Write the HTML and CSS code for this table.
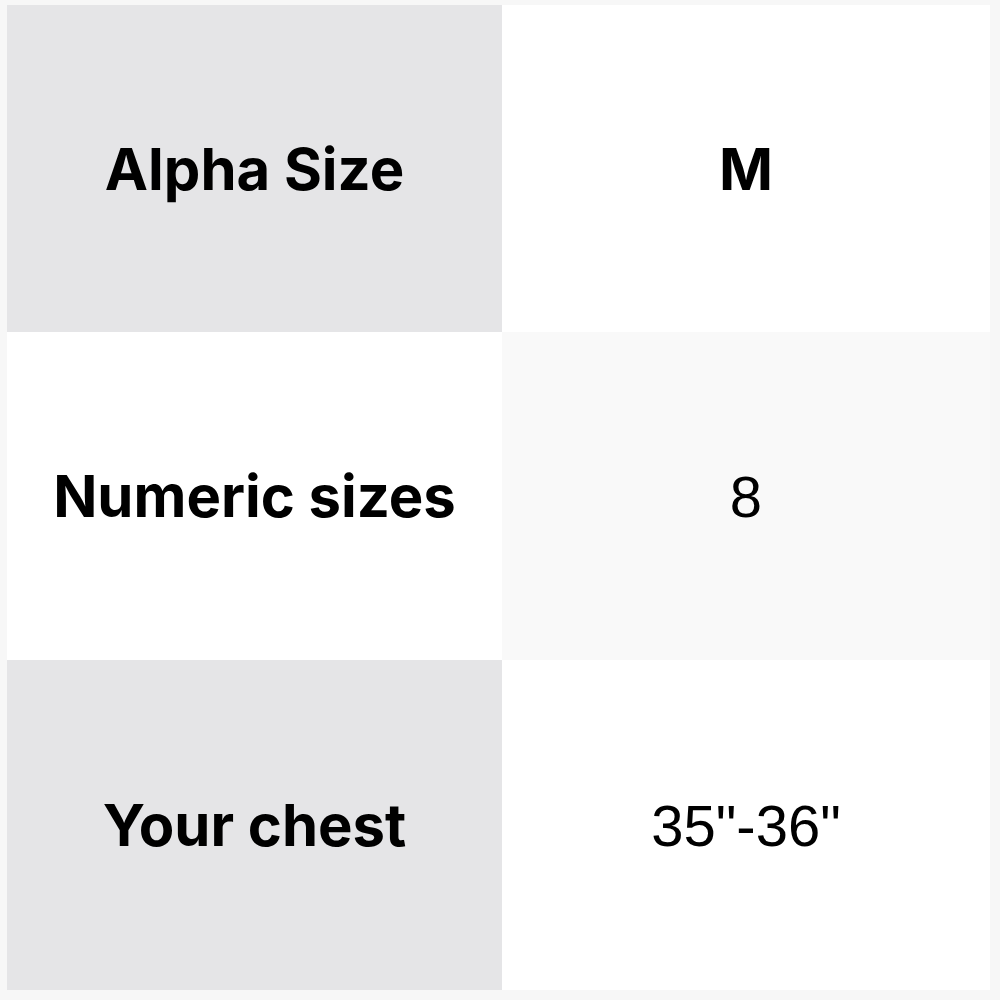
FILE: index.html
```html
<!DOCTYPE html>
<html>
<head>
<meta charset="utf-8">
<link rel="stylesheet" href="styles.css">
</head>
<body>
<div class="table">
  <div class="cell head">Alpha Size</div>
  <div class="cell val bold">M</div>
  <div class="cell head white">Numeric sizes</div>
  <div class="cell val shade">8</div>
  <div class="cell head">Your chest</div>
  <div class="cell val">35"-36"</div>
</div>
</body>
</html>
```
FILE: styles.css
```css
html, body {
  margin: 0;
  padding: 0;
  background: #f7f7f7;
}
body {
  width: 1000px;
  height: 1000px;
  padding: 5px 10px 10px 7px;
  box-sizing: border-box;
  font-family: Inter, "Liberation Sans", sans-serif;
  color: #000;
}
.table {
  display: grid;
  grid-template-columns: 495px 488px;
  grid-template-rows: 327px 328px 330px;
  height: 985px;
}
.cell {
  display: flex;
  align-items: center;
  justify-content: center;
  font-size: 58px;
}
.head {
  background: #e5e5e7;
  font-weight: 700;
}
.head.white {
  background: #ffffff;
}
.val {
  background: #ffffff;
  font-weight: 400;
  font-family: "Liberation Sans", Inter, sans-serif;
}
.val.bold {
  font-weight: 700;
  font-family: Inter, "Liberation Sans", sans-serif;
}
.val.shade {
  background: #f9f9f9;
}
```
